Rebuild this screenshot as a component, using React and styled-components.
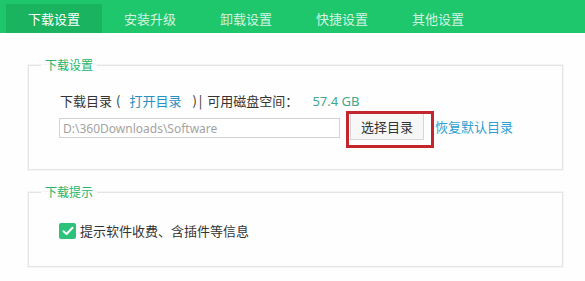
import React from "react";
import styled, { createGlobalStyle } from "styled-components";

const Global = createGlobalStyle`
  html, body { margin: 0; padding: 0; background: #fefefe; }
  body { font-family: "Noto Sans CJK SC", "Noto Sans", sans-serif; color: #333; }
`;

const Page = styled.div`
  width: 585px;
  height: 281px;
  overflow: hidden;
  background: #fefefe;
`;

const TabBar = styled.div`
  display: flex;
  align-items: flex-end;
  height: 33px;
  padding-left: 6px;
  background: #1ec66c;
  box-sizing: border-box;
`;

const Tab = styled.div`
  width: 96px;
  height: 29px;
  display: flex;
  align-items: center;
  justify-content: center;
  font-size: 13px;
  line-height: 16px;
  color: ${(p) => (p.$active ? "#ffffff" : "rgba(255,255,255,0.82)")};
  background: ${(p) => (p.$active ? "#1ab35f" : "transparent")};
`;

const Content = styled.div`
  padding: 24px 22px 0 28px;
  display: flex;
  flex-direction: column;
  gap: 14px;
`;

const Group = styled.fieldset`
  margin: 0;
  border: 1px solid #e4e4e4;
  box-shadow: 0 0 0 1px #f5f5f5;
  padding: ${(p) => p.$pad};
  min-width: 0;
`;

const Legend = styled.legend`
  margin-left: -18px;
  padding: 0 4px;
  font-size: 12px;
  line-height: 16px;
  color: #25b56a;
`;

const InfoRow = styled.div`
  display: flex;
  align-items: center;
  height: 18px;
  font-size: 13px;
  line-height: 18px;
  color: #333;
  white-space: pre;
  padding-left: 1px;
`;

const Link = styled.span`
  color: #2b90bf;
  cursor: pointer;
`;

const Sep = styled.span`
  margin: ${(p) => p.$m};
`;

const Space = styled.span`
  color: #41a88c;
  font-family: "Noto Sans", "Noto Sans CJK SC", sans-serif;
  margin-left: 14px;
`;

const PathRow = styled.div`
  display: flex;
  align-items: flex-start;
  margin-top: 3px;
`;

const PathInput = styled.input`
  box-sizing: border-box;
  width: 281px;
  height: 20px;
  margin-top: 5px;
  border: 1px solid #d3d3d3;
  background: #fff;
  padding: 0 3px;
  font-family: "Noto Sans", sans-serif;
  font-size: 12px;
  color: #a3a3a3;
  outline: none;
`;

const ButtonWrap = styled.div`
  position: relative;
  margin-left: 10px;
`;

const Button = styled.button`
  box-sizing: border-box;
  width: 74px;
  height: 27px;
  border: 1px solid #d6d6d6;
  background: #f7f7f7;
  font-family: "Noto Sans CJK SC", sans-serif;
  font-size: 13px;
  color: #333;
  padding: 0;
`;

const Highlight = styled.div`
  position: absolute;
  top: -2px;
  left: -4px;
  right: -10px;
  bottom: -8px;
  border: 3px solid #c3262c;
  pointer-events: none;
`;

const ResetLink = styled.span`
  margin-left: 11px;
  font-size: 13px;
  line-height: 27px;
  color: #2e9fd0;
  cursor: pointer;
`;

const CheckRow = styled.label`
  display: flex;
  align-items: center;
  gap: 4px;
  font-size: 13px;
  line-height: 18px;
  color: #333;
`;

const Box = styled.span`
  width: 17px;
  height: 16px;
  border-radius: 2px;
  background: #2dc27a;
  display: flex;
  align-items: center;
  justify-content: center;
`;

const tabs = ["下载设置", "安装升级", "卸载设置", "快捷设置", "其他设置"];

export default function App() {
  return (
    <Page>
      <Global />
      <TabBar>
        {tabs.map((t, i) => (
          <Tab key={t} $active={i === 0}>{t}</Tab>
        ))}
      </TabBar>
      <Content>
        <Group $pad="19px 20px 29px 30px">
          <Legend>下载设置</Legend>
          <InfoRow>
            下载目录<Sep $m="0 9px 0 4px">(</Sep><Link>打开目录</Link><Sep $m="0 2px 0 11px">)</Sep><Sep $m="0 5px 0 0">|</Sep>可用磁盘空间：<Space>57.4 GB</Space>
          </InfoRow>
          <PathRow>
            <PathInput readOnly value="D:\360Downloads\Software" />
            <ButtonWrap>
              <Button>选择目录</Button>
              <Highlight />
            </ButtonWrap>
            <ResetLink>恢复默认目录</ResetLink>
          </PathRow>
        </Group>
        <Group $pad="22px 20px 26px 30px">
          <Legend>下载提示</Legend>
          <CheckRow>
            <Box>
              <svg width="12" height="10" viewBox="0 0 12 10">
                <path d="M1.5 5.2 L4.6 8 L10.5 1.8" fill="none" stroke="#fff" strokeWidth="2" strokeLinecap="round" strokeLinejoin="round" />
              </svg>
            </Box>
            提示软件收费、含插件等信息
          </CheckRow>
        </Group>
      </Content>
    </Page>
  );
}
